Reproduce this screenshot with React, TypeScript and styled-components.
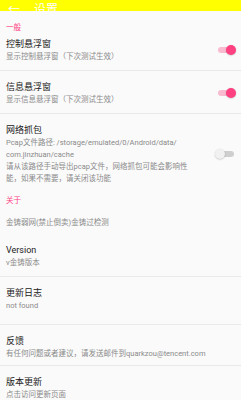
import React from "react";
import styled, { createGlobalStyle } from "styled-components";

const GlobalStyle = createGlobalStyle`
  html, body {
    margin: 0;
    padding: 0;
    background: #fafafa;
  }
  body {
    font-family: Roboto, "Noto Sans CJK SC", sans-serif;
  }
`;

const Page = styled.div`
  width: 241px;
  height: 400px;
  overflow: hidden;
  background: #fafafa;
`;

const Toolbar = styled.div`
  height: 11px;
  background: #ffff00;
  display: flex;
  align-items: flex-end;
  gap: 14px;
  padding-left: 8px;
  overflow: hidden;
`;

const ToolbarTitle = styled.span`
  color: #ffffff;
  font-size: 12px;
  line-height: 12px;
  margin-bottom: -5px;
`;

const Category = styled.div<{ $top: number }>`
  padding: ${({ $top }) => $top}px 6px 4px;
  font-size: 7.5px;
  line-height: 13px;
  color: #ff4081;
`;

const Item = styled.div<{ $top?: number; $bottom?: number; $divider?: boolean }>`
  display: flex;
  align-items: center;
  padding: ${({ $top = 10 }) => $top}px 7px ${({ $bottom = 7 }) => $bottom}px 6px;
  border-bottom: ${({ $divider }) => ($divider ? "1px solid #e9e9e9" : "none")};
`;

const Texts = styled.div`
  flex: 1;
  min-width: 0;
`;

const Title = styled.div`
  font-size: 9px;
  line-height: 13px;
  color: #212121;
`;

const Summary = styled.div<{ $wide?: boolean }>`
  font-size: 7.5px;
  line-height: 12px;
  color: #8a8a8a;
  white-space: ${({ $wide }) => ($wide ? "nowrap" : "pre-line")};
  max-width: ${({ $wide }) => ($wide ? "none" : "190px")};
`;

const Track = styled.div<{ $on: boolean }>`
  position: relative;
  width: 16px;
  height: 6px;
  border-radius: 3px;
  margin-left: 8px;
  flex-shrink: 0;
  background: ${({ $on }) => ($on ? "#f8bbd0" : "#cfcfcf")};
`;

const Thumb = styled.div<{ $on: boolean }>`
  position: absolute;
  top: -2px;
  left: ${({ $on }) => ($on ? "8px" : "-3px")};
  width: 10px;
  height: 10px;
  border-radius: 50%;
  background: ${({ $on }) => ($on ? "#ff4081" : "#f1f1f1")};
  box-shadow: 0 0.5px 1.5px rgba(0, 0, 0, 0.25);
`;

const Switch = ({ on }: { on: boolean }) => (
  <Track $on={on}>
    <Thumb $on={on} />
  </Track>
);

export default function App() {
  return (
    <Page>
      <GlobalStyle />
      <Toolbar>
        <ToolbarTitle>←</ToolbarTitle>
        <ToolbarTitle>设置</ToolbarTitle>
      </Toolbar>

      <Category $top={9.5}>一般</Category>
      <Item $top={0} $divider>
        <Texts>
          <Title>控制悬浮窗</Title>
          <Summary>显示控制悬浮窗（下次测试生效）</Summary>
        </Texts>
        <Switch on />
      </Item>
      <Item $divider>
        <Texts>
          <Title>信息悬浮窗</Title>
          <Summary>显示信息悬浮窗（下次测试生效）</Summary>
        </Texts>
        <Switch on />
      </Item>
      <Item>
        <Texts>
          <Title>网络抓包</Title>
          <Summary>
            {"Pcap文件路径: /storage/emulated/0/Android/data/\ncom.jinzhuan/cache\n请从该路径手动导出pcap文件，网络抓包可能会影响性能，如果不需要，请关闭该功能"}
          </Summary>
        </Texts>
        <Switch on={false} />
      </Item>

      <Category $top={2}>关于</Category>
      <Item $top={6} $bottom={5}>
        <Texts>
          <Summary>金铸弱网(禁止倒卖)金铸过检测</Summary>
        </Texts>
      </Item>
      <Item $divider>
        <Texts>
          <Title>Version</Title>
          <Summary>v金铸版本</Summary>
        </Texts>
      </Item>
      <Item $divider $bottom={12}>
        <Texts>
          <Title>更新日志</Title>
          <Summary>not found</Summary>
        </Texts>
      </Item>
      <Item $divider $bottom={5}>
        <Texts>
          <Title>反馈</Title>
          <Summary $wide>有任何问题或者建议，请发送邮件到quarkzou@tencent.com</Summary>
        </Texts>
      </Item>
      <Item>
        <Texts>
          <Title>版本更新</Title>
          <Summary>点击访问更新页面</Summary>
        </Texts>
      </Item>
    </Page>
  );
}
